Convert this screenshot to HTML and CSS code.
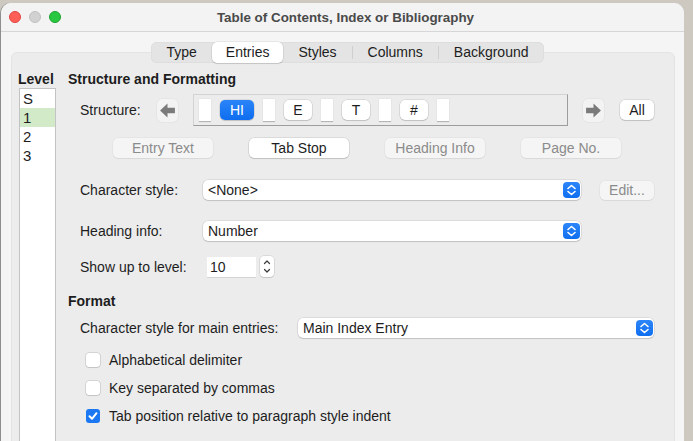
FILE: index.html
```html
<!DOCTYPE html>
<html lang="en">

<head>
    <meta charset="UTF-8">
    <meta name="viewport" content="width=device-width, initial-scale=1.0">
    <title>Table of Contents, Index or Bibliography</title>
    <link rel="stylesheet" href="styles.css">
</head>

<body>
    <div class="window">
        <div class="titlebar">
            <div class="lights">
                <span class="light red"></span>
                <span class="light gray"></span>
                <span class="light green"></span>
            </div>
            <div class="title">Table of Contents, Index or Bibliography</div>
            <div></div>
        </div>

        <div class="content">
            <div class="tabs-wrap">
                <div class="tabs">
                    <span class="tab">Type</span>
                    <span class="tab active">Entries</span>
                    <span class="tab">Styles</span>
                    <span class="sep"></span>
                    <span class="tab">Columns</span>
                    <span class="sep"></span>
                    <span class="tab">Background</span>
                </div>
            </div>

            <div class="panel">
                <div class="levels">
                    <div class="heading">Level</div>
                    <ul class="levellist">
                        <li>S</li>
                        <li class="selected">1</li>
                        <li>2</li>
                        <li>3</li>
                    </ul>
                </div>

                <div class="main">
                    <div class="heading">Structure and Formatting</div>

                    <!-- structure editor -->
                    <div class="row structure-row">
                        <span class="label structure-label">Structure:</span>
                        <span class="arrow-btn">
                            <svg width="17" height="15" viewBox="0 0 16 14"><path d="M1 7 L8 0.5 L8 4.5 L15 4.5 L15 9.5 L8 9.5 L8 13.5 Z" fill="#7b7b7b"/></svg>
                        </span>
                        <div class="structure">
                            <span class="slot"></span>
                            <span class="token active">HI</span>
                            <span class="slot"></span>
                            <span class="token">E</span>
                            <span class="slot"></span>
                            <span class="token">T</span>
                            <span class="slot"></span>
                            <span class="token">#</span>
                            <span class="slot"></span>
                        </div>
                        <span class="arrow-btn right">
                            <svg width="17" height="15" viewBox="0 0 16 14"><path d="M15 7 L8 0.5 L8 4.5 L1 4.5 L1 9.5 L8 9.5 L8 13.5 Z" fill="#7b7b7b"/></svg>
                        </span>
                        <span class="btn all-btn">All</span>
                    </div>

                    <div class="row entry-buttons">
                        <span class="btn wide disabled">Entry Text</span>
                        <span class="btn wide">Tab Stop</span>
                        <span class="btn wide disabled">Heading Info</span>
                        <span class="btn wide disabled">Page No.</span>
                    </div>

                    <div class="row field-row first">
                        <span class="label label-char">Character style:</span>
                        <div class="select sel-char">
                            <span>&lt;None&gt;</span>
                            <span class="sel-arrow"><svg width="17" height="16" viewBox="0 0 17 16"><path d="M5 6.5 L8.5 3.5 L12 6.5 M5 9.5 L8.5 12.5 L12 9.5" stroke="#fff" stroke-width="1.6" fill="none" stroke-linecap="round" stroke-linejoin="round"/></svg></span>
                        </div>
                        <span class="btn edit-btn disabled">Edit...</span>
                    </div>

                    <div class="row field-row">
                        <span class="label label-char">Heading info:</span>
                        <div class="select sel-char">
                            <span>Number</span>
                            <span class="sel-arrow"><svg width="17" height="16" viewBox="0 0 17 16"><path d="M5 6.5 L8.5 3.5 L12 6.5 M5 9.5 L8.5 12.5 L12 9.5" stroke="#fff" stroke-width="1.6" fill="none" stroke-linecap="round" stroke-linejoin="round"/></svg></span>
                        </div>
                    </div>

                    <div class="row spin-row">
                        <span class="label label-spin">Show up to level:</span>
                        <span class="spin-field">10</span>
                        <span class="stepper">
                            <svg width="14" height="21" viewBox="0 0 14 21"><path d="M4.5 7.5 L7 5 L9.5 7.5 M4.5 13.5 L7 16 L9.5 13.5" stroke="#3a3a3a" stroke-width="1.2" fill="none" stroke-linecap="round" stroke-linejoin="round"/></svg>
                        </span>
                    </div>

                    <div class="heading format-heading">Format</div>

                    <div class="row main-row">
                        <span class="label label-main">Character style for main entries:</span>
                        <div class="select sel-main">
                            <span>Main Index Entry</span>
                            <span class="sel-arrow"><svg width="17" height="16" viewBox="0 0 17 16"><path d="M5 6.5 L8.5 3.5 L12 6.5 M5 9.5 L8.5 12.5 L12 9.5" stroke="#fff" stroke-width="1.6" fill="none" stroke-linecap="round" stroke-linejoin="round"/></svg></span>
                        </div>
                    </div>

                    <div class="checks">
                        <div class="check-row"><span class="checkbox"></span>Alphabetical delimiter</div>
                        <div class="check-row"><span class="checkbox"></span>Key separated by commas</div>
                        <div class="check-row"><span class="checkbox checked"><svg width="14" height="14" viewBox="0 0 14 14"><path d="M3.5 7.3 L6 9.8 L10.5 4.2" stroke="#fff" stroke-width="2" fill="none" stroke-linecap="round" stroke-linejoin="round"/></svg></span>Tab position relative to paragraph style indent</div>
                    </div>
                </div>
            </div>
        </div>
    </div>
</body>

</html>
```

FILE: styles.css
```css
*{
    margin: 0;
    padding: 0;
    box-sizing: border-box;
}
li{
    list-style: none;
}
body{
    background-color: #cdc8c0;
    font-family: "Liberation Sans", Arial, sans-serif;
    font-size: 14px;
    color: #1d1d1d;
    overflow: hidden;
    height: 441px;
}
.window{
    margin: 3px 9px 0 1px;
    height: 440px;
    background-color: #f5f5f5;
    border-radius: 10px 10px 0 0;
    overflow: hidden;
    box-shadow: -1px 0 0 #8e8e8e;
}
.titlebar{
    height: 29px;
    display: grid;
    grid-template-columns: 1fr auto 1fr;
    align-items: center;
    border-bottom: 1px solid #d6d6d6;
    background-color: #f3f3f3;
}
.lights{
    display: flex;
    gap: 8px;
    padding-left: 8px;
}
.light{
    width: 12px;
    height: 12px;
    border-radius: 50%;
}
.light.red{
    background-color: #fe5f57;
    border: 0.5px solid #e0443e;
}
.light.gray{
    background-color: #d1d1d1;
    border: 0.5px solid #c0c0c0;
}
.light.green{
    background-color: #2ac840;
    border: 0.5px solid #1ca22f;
}
.title{
    font-weight: bold;
    color: #4a4a4a;
    font-size: 13.4px;
    padding: 1px 0 0 6px;
}

.content{
    padding: 10px 9px 0 10px;
}
.tabs-wrap{
    display: flex;
    justify-content: center;
    padding-left: 9px;
    position: relative;
    z-index: 1;
}
.tabs{
    display: flex;
    align-items: center;
    height: 21px;
    background-color: #e4e4e4;
    border-radius: 6px;
    box-shadow: inset 0 0 0 0.5px #d8d8d8;
}
.tab{
    height: 21px;
    line-height: 21px;
    padding: 0 15px;
    color: #1d1d1d;
}
.tab.active{
    background-color: #fff;
    border-radius: 5px;
    box-shadow: 0 0 0 0.5px rgba(0,0,0,.12), 0 1px 1px rgba(0,0,0,.12);
    padding: 0 14px;
}
.sep{
    width: 1px;
    height: 13px;
    background-color: #cfcfcf;
}

.panel{
    margin-top: -11px;
    height: 400px;
    background-color: #ececec;
    border: 1px solid #e3e3e3;
    border-radius: 6px;
    padding: 18px 0 0 6px;
    display: flex;
    gap: 12px;
}
.heading{
    font-weight: bold;
    line-height: 16px;
    height: 16px;
}
.levels{
    width: 38px;
}
.levellist{
    margin: 1px 0 0 1px;
    width: 37px;
    height: 400px;
    background-color: #fff;
    border: 1px solid #c3c3c3;
}
.levellist li{
    height: 19px;
    line-height: 19px;
    padding-left: 3px;
    font-size: 15px;
}
.levellist .selected{
    background-color: #d3eac9;
}

.main{
    flex: 1;
}
.row{
    display: flex;
    align-items: center;
}
.label{
    margin-left: 12px;
    flex-shrink: 0;
}
.structure-row{
    margin-top: 7px;
    height: 32px;
}
.structure-label{
    width: 77px;
}
.arrow-btn{
    width: 21px;
    height: 23px;
    border-radius: 5px;
    background-color: #f3f3f3;
    box-shadow: 0 0 0 0.5px rgba(0,0,0,.06);
    display: flex;
    align-items: center;
    justify-content: center;
    margin-right: 15px;
}
.arrow-btn.right{
    margin: 0 16px 0 15px;
}
.structure{
    width: 375px;
    height: 32px;
    border: 1px solid #9d9d9d;
    border-top-color: #d3d3d3;
    border-left-color: #d3d3d3;
    display: flex;
    align-items: center;
    gap: 9px;
    padding-left: 5px;
}
.slot{
    width: 12px;
    height: 23px;
    background-color: #fff;
    border-bottom: 1px solid #b5b5b5;
    box-shadow: 0 0 0 0.5px #e0e0e0;
}
.token{
    height: 20px;
    line-height: 20px;
    min-width: 28px;
    padding: 0 8px;
    text-align: center;
    background-color: #fff;
    border-radius: 5px;
    box-shadow: 0 0 0 0.5px rgba(0,0,0,.15), 0 1px 1px rgba(0,0,0,.12);
}
.token.active{
    background: linear-gradient(#2b84f8, #0e6ef0);
    color: #fff;
    padding: 0 10px;
}
.btn{
    height: 20px;
    line-height: 20px;
    text-align: center;
    background-color: #fff;
    border-radius: 5px;
    box-shadow: 0 0 0 0.5px rgba(0,0,0,.15), 0 1px 1px rgba(0,0,0,.12);
}
.btn.disabled{
    background-color: #f5f5f5;
    color: #8b8b8b;
    box-shadow: 0 0 0 0.5px rgba(0,0,0,.06), 0 1px 1px rgba(0,0,0,.05);
}
.all-btn{
    width: 34px;
}
.entry-buttons{
    margin-top: 12px;
    padding-left: 45px;
    gap: 36px;
}
.btn.wide{
    width: 100px;
}

.field-row{
    margin-top: 21px;
    height: 20px;
}
.field-row.first{
    margin-top: 22px;
}
.label-char{
    width: 123px;
}
.select{
    height: 20px;
    background-color: #fff;
    border-radius: 5px;
    box-shadow: 0 0 0 0.5px rgba(0,0,0,.14), 0 1px 1px rgba(0,0,0,.12);
    display: flex;
    align-items: center;
    justify-content: space-between;
    padding: 0 1px 0 5px;
}
.sel-char{
    width: 378px;
}
.sel-arrow{
    width: 17px;
    height: 16px;
    border-radius: 4px;
    background: linear-gradient(#2d86f9, #0f6ff0);
    display: flex;
}
.edit-btn{
    width: 54px;
    height: 19px;
    line-height: 19px;
    margin-left: 19px;
}

.spin-row{
    margin-top: 15px;
    height: 21px;
}
.label-spin{
    width: 127px;
}
.spin-field{
    width: 49px;
    height: 20px;
    line-height: 20px;
    background-color: #fff;
    padding-left: 3px;
    box-shadow: 0 1px 0 #d4d4d4;
}
.stepper{
    width: 14px;
    height: 21px;
    margin-left: 4px;
    background-color: #fff;
    border-radius: 4px;
    box-shadow: 0 0 0 0.5px rgba(0,0,0,.15), 0 1px 1px rgba(0,0,0,.1);
    display: flex;
}

.format-heading{
    margin-top: 16px;
}
.main-row{
    margin-top: 9px;
    height: 20px;
}
.label-main{
    width: 218px;
}
.sel-main{
    width: 356px;
}

.checks{
    margin-top: 8px;
}
.check-row{
    height: 28px;
    display: flex;
    align-items: center;
    padding-left: 18px;
}
.checkbox{
    width: 14px;
    height: 14px;
    border-radius: 3px;
    background-color: #fff;
    box-shadow: 0 0 0 0.5px rgba(0,0,0,.2), 0 1px 1px rgba(0,0,0,.08);
    margin-right: 9px;
    display: flex;
}
.checkbox.checked{
    background-color: #1b77f2;
    box-shadow: none;
}
```
